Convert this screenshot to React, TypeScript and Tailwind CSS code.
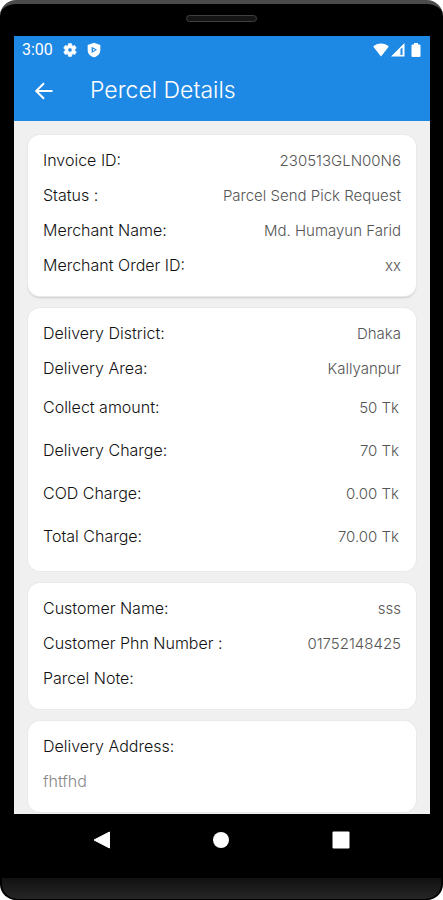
import React from "react";

type Row = { label: string; value?: string; tall?: boolean };

const cards: Row[][] = [
  [
    { label: "Invoice ID:", value: "230513GLN00N6" },
    { label: "Status :", value: "Parcel Send Pick Request" },
    { label: "Merchant Name:", value: "Md. Humayun Farid" },
    { label: "Merchant Order ID:", value: "xx" },
  ],
  [
    { label: "Delivery District:", value: "Dhaka" },
    { label: "Delivery Area:", value: "Kallyanpur" },
    { label: "Collect amount:", value: "50 Tk", tall: true },
    { label: "Delivery Charge:", value: "70 Tk", tall: true },
    { label: "COD Charge:", value: "0.00 Tk", tall: true },
    { label: "Total Charge:", value: "70.00 Tk", tall: true },
  ],
  [
    { label: "Customer Name:", value: "sss" },
    { label: "Customer Phn Number :", value: "01752148425" },
    { label: "Parcel Note:" },
  ],
];

const StatusBar: React.FC = () => (
  <div className="flex h-7 items-center justify-between px-2 text-white">
    <div className="flex items-center">
      <span className="w-10 font-[Roboto] text-base">3:00</span>
      <svg className="h-4 w-4" viewBox="0 0 24 24" fill="currentColor">
        <path
          stroke="currentColor"
          strokeWidth="1"
          d="M19.14 12.94c.04-.3.06-.61.06-.94s-.02-.64-.07-.94l2.03-1.58a.49.49 0 0 0 .12-.61l-1.92-3.32a.49.49 0 0 0-.59-.22l-2.39.96a7 7 0 0 0-1.62-.94l-.36-2.54a.48.48 0 0 0-.48-.41h-3.84a.47.47 0 0 0-.47.41l-.36 2.54c-.59.24-1.13.57-1.62.94l-2.39-.96a.48.48 0 0 0-.59.22L2.74 8.87a.47.47 0 0 0 .12.61l2.03 1.58a6 6 0 0 0 0 1.88l-2.03 1.58a.49.49 0 0 0-.12.61l1.92 3.32c.12.22.37.29.59.22l2.39-.96c.5.38 1.03.7 1.62.94l.36 2.54c.05.24.24.41.48.41h3.84c.24 0 .44-.17.47-.41l.36-2.54a7 7 0 0 0 1.62-.94l2.39.96c.22.08.47 0 .59-.22l1.92-3.32a.47.47 0 0 0-.12-.61zM12 15.2a3.2 3.2 0 1 1 0-6.4 3.2 3.2 0 0 1 0 6.4z"
        />
      </svg>
      <svg className="ml-2 h-4 w-4" viewBox="0 0 24 24" fill="currentColor" fillRule="evenodd">
        <path d="M12 1 2.500 4.500V12c0 5.500 4 9.500 9.500 11 5.500-1.500 9.500-5.500 9.500-11V4.500zM8.500 7v9.500l8-4.700z" />
        <path d="M10.500 10v3.500l3-1.700z" />
      </svg>
    </div>
    <div className="flex items-center">
      <svg className="h-4 w-4" viewBox="0 0 16 16" fill="currentColor">
        <path d="M8 14.500.2 4.600C2.200 2.500 5 1.500 8 1.500s5.800 1 7.800 3.100z" />
      </svg>
      <svg className="ml-px h-4 w-4" viewBox="0 0 16 16" fill="currentColor" fillRule="evenodd">
        <path d="M1 14.500 14.500 1v13.500zM10.500 7v6H12.500V5.500z" />
      </svg>
      <svg className="ml-1 h-4 w-3" viewBox="0 0 12 16" fill="currentColor">
        <path d="M4 1h4v1.500h1.500a1 1 0 0 1 1 1V14a1 1 0 0 1-1 1h-7a1 1 0 0 1-1-1V3.500a1 1 0 0 1 1-1H4z" />
      </svg>
    </div>
  </div>
);

const Card: React.FC<{ children: React.ReactNode; raised?: boolean }> = ({ children, raised }) => (
  <section
    className={`rounded-xl bg-white px-[15px] pt-2 pb-[13px] ring-1 ring-[#e9e9e9] ${
      raised ? "shadow-[0_2px_2px_#cccccc]" : ""
    }`}
  >
    {children}
  </section>
);

const App: React.FC = () => {
  return (
    <div className="min-h-screen bg-white font-['Inter',sans-serif]">
      <div className="flex min-h-screen flex-col rounded-2xl border-t-4 border-[#4b4b4b] bg-black">
        <div className="flex h-8 justify-center pt-[11px]">
          <div className="h-[7px] w-[71px] rounded-sm border border-[#404040] bg-[#151515]" />
        </div>

        <main className="mr-[13px] ml-[14px] flex-1 bg-[#f0f0f0]">
          <header className="h-[85px] bg-[#1e88e5] text-white">
            <StatusBar />
            <div className="flex h-[52px] items-center">
              <button aria-label="Back" className="ml-5 flex h-5 w-5 items-center justify-center">
                <svg className="h-5 w-5" viewBox="0 0 20 20" fill="none" stroke="currentColor" strokeWidth="2">
                  <path d="M18.500 11H2.500M10 3.200 2.200 11l7.800 7.800" />
                </svg>
              </button>
              <h1 className="ml-9 text-[23px] font-light">Percel Details</h1>
            </div>
          </header>

          <div className="flex flex-col gap-3 px-[14px] pt-[14px] pb-[2px]">
            {cards.map((rows, i) => (
              <Card key={i} raised={i === 0}>
                <dl className="font-light">
                  {rows.map((row) => (
                    <div
                      key={row.label}
                      className={`flex items-baseline justify-between ${
                        row.tall ? "h-[43px] pr-[2px] leading-[43px]" : "h-[35px] leading-[35px]"
                      }`}
                    >
                      <dt className="text-[16px] text-[#111111]">{row.label}</dt>
                      <dd className="text-[15px] text-[#555555]">{row.value}</dd>
                    </div>
                  ))}
                </dl>
              </Card>
            ))}
            <Card>
              <dl className="leading-[35px] font-light">
                <dt className="text-[16px] text-[#111111]">Delivery Address:</dt>
                <dd className="text-[16px] text-[#888888]">fhtfhd</dd>
              </dl>
            </Card>
          </div>
        </main>

        <nav className="flex h-16 items-start justify-around px-[42px] pt-[17px] text-white">
          <button aria-label="Back">
            <svg className="h-[18px] w-[18px]" viewBox="0 0 18 18" fill="currentColor">
              <path d="M16.500 1v16L1 9z" stroke="currentColor" strokeLinejoin="round" />
            </svg>
          </button>
          <button aria-label="Home">
            <svg className="h-[18px] w-[18px]" viewBox="0 0 18 18" fill="currentColor">
              <circle cx="9" cy="9" r="8" />
            </svg>
          </button>
          <button aria-label="Recent apps">
            <svg className="h-[18px] w-[18px]" viewBox="0 0 18 18" fill="currentColor">
              <rect x="0.500" y="0.500" width="17" height="17" rx="1" />
            </svg>
          </button>
        </nav>
        <div className="mx-[2px] h-[22px] rounded-b-2xl border-b border-black bg-linear-to-b from-[#111111] to-[#262626]" />
      </div>
    </div>
  );
};

export default App;
